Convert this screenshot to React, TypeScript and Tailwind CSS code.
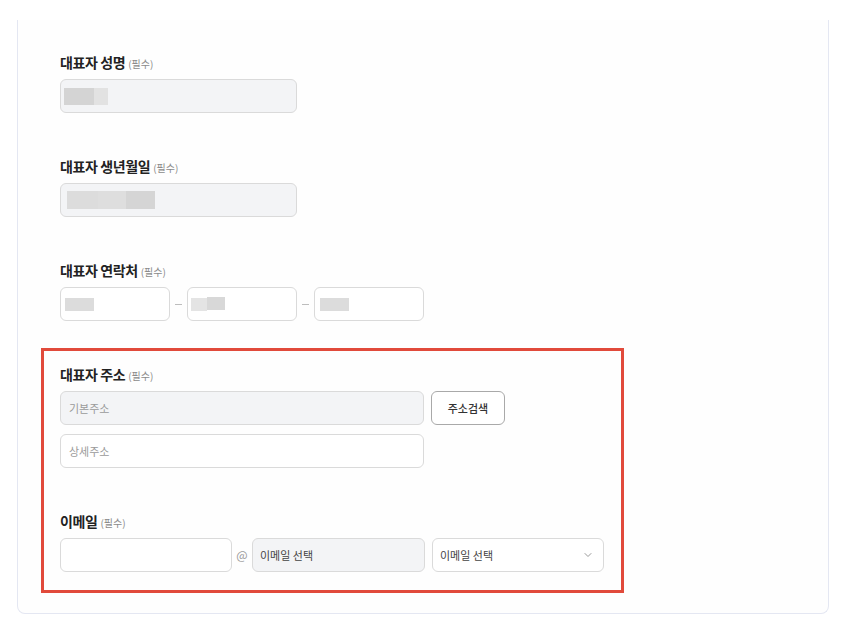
import { ChevronDown } from 'lucide-react';

function FieldLabel({ title }: { title: string }) {
  return (
    <div className="flex items-baseline gap-[3px] h-[18px] leading-[18px] mb-2">
      <span className="text-[14px] font-bold text-[#222] tracking-[-0.4px]">{title}</span>
      <span className="text-[10px] text-[#8a8a8a]">(필수)</span>
    </div>
  );
}

function Blur({ w, tone = 'bg-[#d8d8d8]', h = 'h-[17px]' }: { w: string; tone?: string; h?: string }) {
  return <div className={`${w} ${h} ${tone}`} />;
}

export default function App() {
  return (
    <div className="min-h-screen bg-white font-['Noto_Sans_CJK_KR','Noto_Sans',sans-serif]">
      <div className="pt-[20px]">
        <div className="ml-[17px] w-[812px] border-x border-b border-[#e4e7f2] rounded-b-lg bg-[#fefefe] pt-[33px] pb-[20px] pl-[42px]">
          <section>
            <FieldLabel title="대표자 성명" />
            <div className="w-[237px] h-[34px] rounded-md border border-[#dadada] bg-[#f3f4f6] flex items-center pl-[3px]">
              <div className="flex">
                <Blur w="w-[30px]" tone="bg-[#d4d4d4]" />
                <Blur w="w-[14px]" tone="bg-[#e2e2e2]" />
              </div>
            </div>
          </section>

          <section className="mt-[44px]">
            <FieldLabel title="대표자 생년월일" />
            <div className="w-[237px] h-[34px] rounded-md border border-[#dadada] bg-[#f3f4f6] flex items-center pl-[6px]">
              <div className="flex">
                <Blur w="w-[31px]" tone="bg-[#dcdcdc]" h="h-[18px]" />
                <Blur w="w-[28px]" tone="bg-[#dedede]" h="h-[18px]" />
                <Blur w="w-[29px]" tone="bg-[#d5d5d5]" h="h-[18px]" />
              </div>
            </div>
          </section>

          <section className="mt-[44px]">
            <FieldLabel title="대표자 연락처" />
            <div className="flex items-center">
              <div className="w-[110px] h-[34px] rounded-md border border-[#dadada] bg-white flex items-center pl-[4px]">
                <Blur w="w-[29px]" tone="bg-[#dcdcdc]" h="h-[13px]" />
              </div>
              <div className="w-[17px] flex justify-center">
                <div className="w-[7px] h-px bg-[#bdbdbd]" />
              </div>
              <div className="w-[110px] h-[34px] rounded-md border border-[#dadada] bg-white flex items-center pl-[3px]">
                <div className="flex items-start">
                  <Blur w="w-[16px]" tone="bg-[#e4e4e4]" h="h-[13px] mt-[1px]" />
                  <Blur w="w-[18px]" tone="bg-[#d8d8d8]" h="h-[13px]" />
                </div>
              </div>
              <div className="w-[17px] flex justify-center">
                <div className="w-[7px] h-px bg-[#bdbdbd]" />
              </div>
              <div className="w-[110px] h-[34px] rounded-md border border-[#dadada] bg-white flex items-center pl-[5px]">
                <Blur w="w-[29px]" tone="bg-[#dcdcdc]" h="h-[13px]" />
              </div>
            </div>
          </section>

          <div className="mt-[27px] ml-[-19px] w-[583px] border-[3px] border-[#e14a3b] pt-[14px] pb-[18px] px-[16px]">
            <section>
              <FieldLabel title="대표자 주소" />
              <div className="flex gap-[7px]">
                <div className="w-[364px] h-[34px] rounded-md border border-[#dadada] bg-[#f3f4f6] flex items-center px-[8px] text-[11px] text-[#9a9a9a]">
                  기본주소
                </div>
                <button className="w-[74px] h-[34px] rounded-md border border-[#a9a9a9] bg-white text-[11px] font-medium text-[#333]">
                  주소검색
                </button>
              </div>
              <div className="mt-[9px] w-[364px] h-[34px] rounded-md border border-[#dadada] bg-white flex items-center px-[8px] text-[11px] text-[#9a9a9a]">
                상세주소
              </div>
            </section>

            <section className="mt-[44px]">
              <FieldLabel title="이메일" />
              <div className="flex items-center">
                <div className="w-[172px] h-[34px] rounded-md border border-[#dadada] bg-white" />
                <div className="w-[20px] text-center text-[12px] text-[#9a9a9a]">@</div>
                <div className="w-[173px] h-[34px] rounded-md border border-[#dadada] bg-[#f3f4f6] flex items-center px-[7px] text-[11px] text-[#444]">
                  이메일 선택
                </div>
                <div className="ml-[7px] w-[172px] h-[34px] rounded-md border border-[#dadada] bg-white flex items-center justify-between pl-[7px] pr-[9px] text-[11px] text-[#444]">
                  <span>이메일 선택</span>
                  <ChevronDown size={12} strokeWidth={2} className="text-[#9a9a9a]" />
                </div>
              </div>
            </section>
          </div>
        </div>
      </div>
    </div>
  );
}
